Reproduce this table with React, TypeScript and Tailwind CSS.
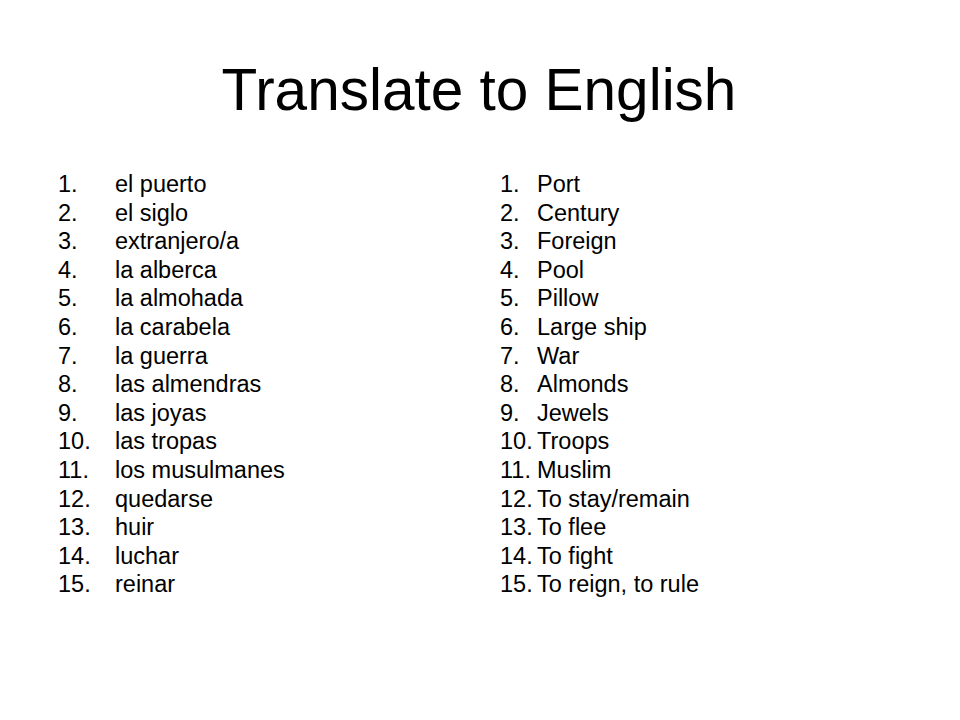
const spanish = [
  "el puerto",
  "el siglo",
  "extranjero/a",
  "la alberca",
  "la almohada",
  "la carabela",
  "la guerra",
  "las almendras",
  "las joyas",
  "las tropas",
  "los musulmanes",
  "quedarse",
  "huir",
  "luchar",
  "reinar",
];

const english = [
  "Port",
  "Century",
  "Foreign",
  "Pool",
  "Pillow",
  "Large ship",
  "War",
  "Almonds",
  "Jewels",
  "Troops",
  "Muslim",
  "To stay/remain",
  "To flee",
  "To fight",
  "To reign, to rule",
];

function WordList({ words, numWidth }: { words: string[]; numWidth: string }) {
  return (
    <ol className="flex flex-col">
      {words.map((w, i) => (
        <li key={w} className="flex h-[28.6px] text-[23.5px] leading-[28.6px] text-black">
          <span className={numWidth}>{i + 1}.</span>
          <span className="whitespace-nowrap">{w}</span>
        </li>
      ))}
    </ol>
  );
}

export default function App() {
  return (
    <div className="h-[720px] w-[960px] bg-white font-['Liberation_Sans',Arial,sans-serif]">
      <h1 className="pt-[61px] pr-[2px] text-center text-[58.5px] leading-[58px] font-normal text-black">
        Translate to English
      </h1>
      <div className="mt-[51px] flex pl-[58px]">
        <div className="w-[442px]">
          <WordList words={spanish} numWidth="w-[57px] shrink-0" />
        </div>
        <WordList words={english} numWidth="w-[37px] shrink-0" />
      </div>
    </div>
  );
}
